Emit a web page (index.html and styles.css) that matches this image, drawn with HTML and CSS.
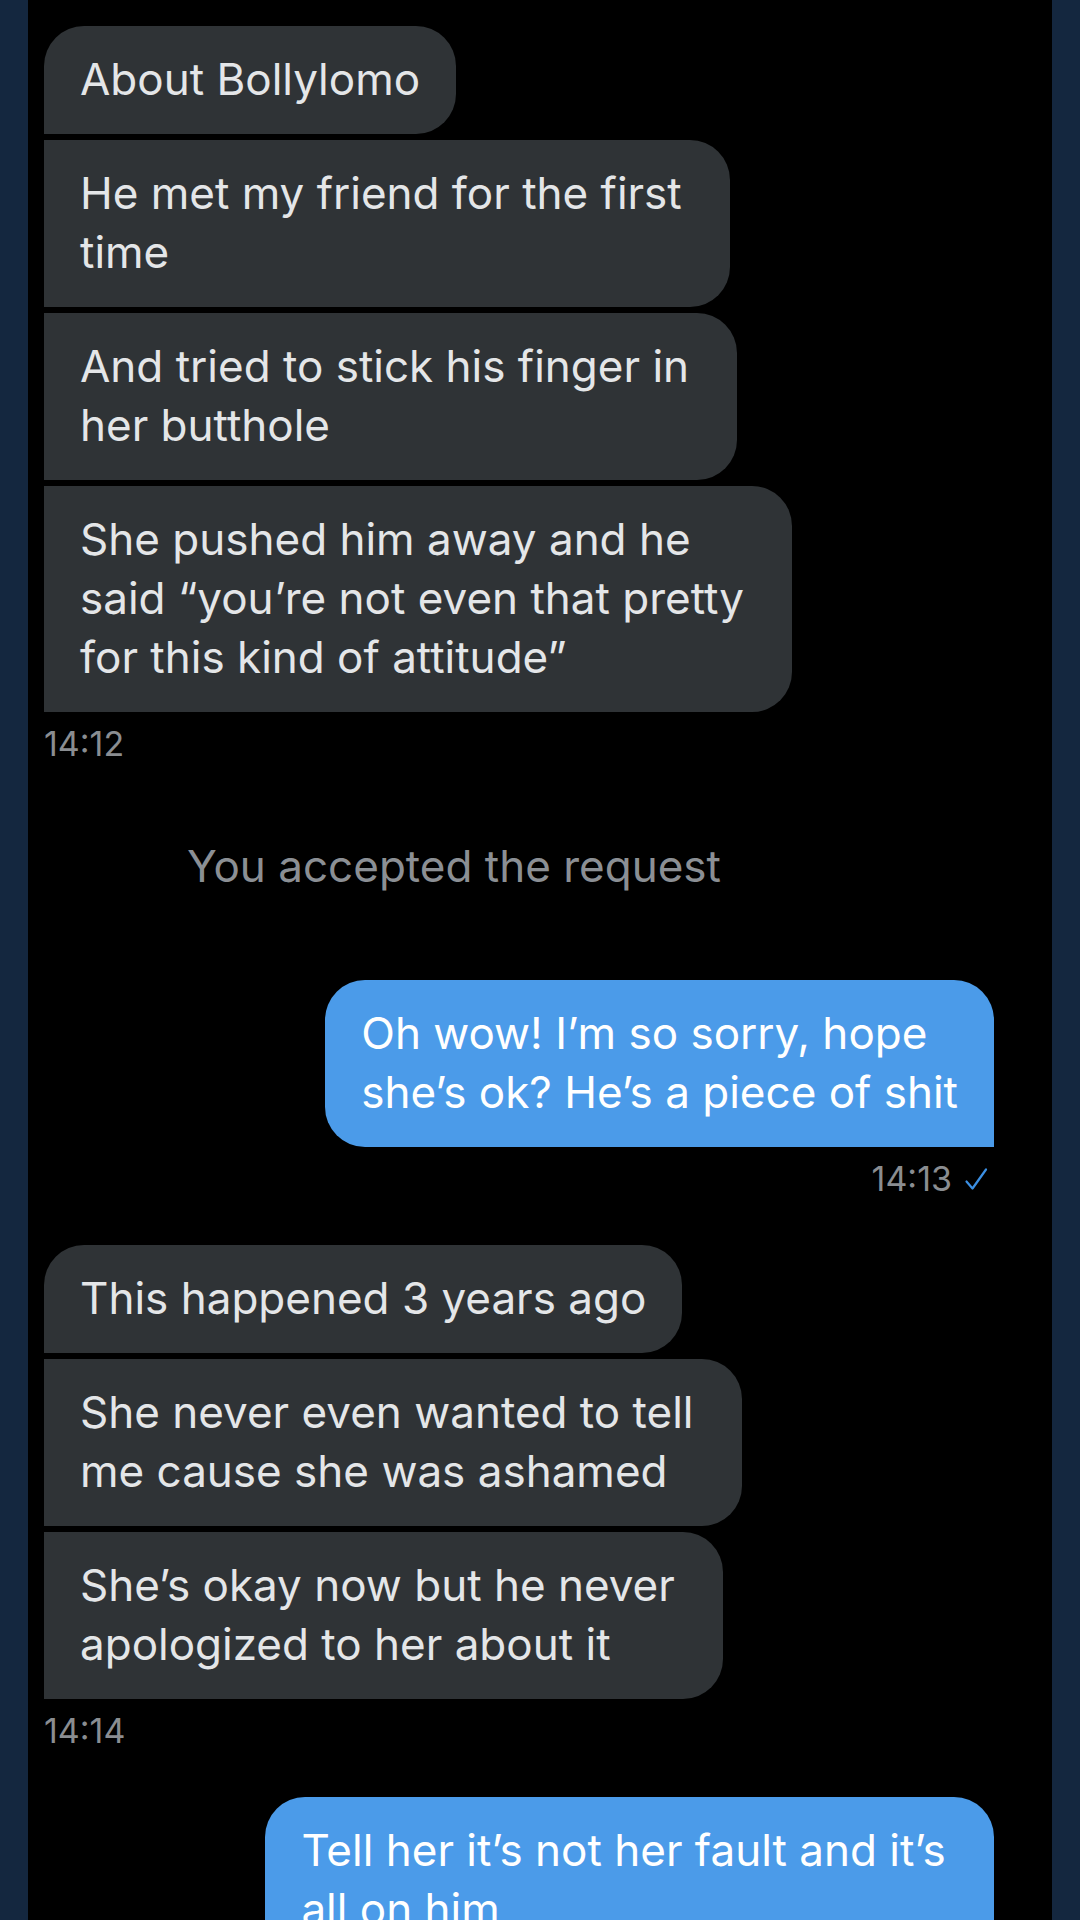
FILE: index.html
```html
<!DOCTYPE html>
<html lang="en">
  <head>
    <meta charset="UTF-8" />
    <meta name="viewport" content="width=device-width, initial-scale=1.0" />
    <title>Messages</title>
    <link rel="stylesheet" href="styles.css">
  </head>
  <body>
    <div class="chat">
      <div class="group in">
        <div class="bubble">About Bollylomo</div>
        <div class="bubble">He met my friend for the first&nbsp;<br>time</div>
        <div class="bubble">And tried to stick his finger in&nbsp;<br>her butthole</div>
        <div class="bubble">She pushed him away and he&nbsp;<br>said “you’re not even that pretty&nbsp;<br>for this kind of attitude”</div>
      </div>
      <div class="time">14:12</div>

      <div class="notice">You accepted the request</div>

      <div class="group out">
        <div class="bubble">Oh wow! I’m so sorry, hope&nbsp;<br>she’s ok? He’s a piece of shit</div>
      </div>
      <div class="time sent">
        <span>14:13</span>
        <svg class="tick" viewBox="0 0 24 24" width="24" height="24">
          <path d="M2.5 14.5 L8.5 21.5 L22 2.5" fill="none" stroke="#3b8fe3" stroke-width="2.2" stroke-linecap="round" stroke-linejoin="round" />
        </svg>
      </div>

      <div class="group in">
        <div class="bubble">This happened 3 years ago</div>
        <div class="bubble">She never even wanted to tell&nbsp;<br>me cause she was ashamed</div>
        <div class="bubble">She’s okay now but he never&nbsp;<br>apologized to her about it</div>
      </div>
      <div class="time">14:14</div>

      <div class="group out">
        <div class="bubble">Tell her it’s not her fault and it’s&nbsp;<br>all on him</div>
      </div>
    </div>
  </body>
</html>
```
FILE: styles.css
```css
body {
  margin: 0;
  background-color: #14273f;
  font-family: Inter, "Liberation Sans", sans-serif;
}
.chat {
  margin: 0 28px;
  height: 1920px;
  overflow: hidden;
  box-sizing: border-box;
  padding: 26px 58px 0 16px;
  background-color: #000;
}
.group {
  display: flex;
  flex-direction: column;
  gap: 6px;
}
.group.in {
  align-items: flex-start;
}
.group.out {
  align-items: flex-end;
}
.bubble {
  padding: 24px 36px 25px;
  font-size: 44px;
  line-height: 59px;
  white-space: nowrap;
}
.in .bubble {
  background-color: #2f3336;
  color: #e4e6e8;
  border-radius: 0 40px 40px 0;
}
.in .bubble:first-child {
  border-top-left-radius: 40px;
}
.out .bubble {
  background-color: #4b9be9;
  color: #fff;
  border-radius: 40px 40px 0 40px;
}
.time {
  margin-top: 12px;
  font-size: 34px;
  line-height: 40px;
  color: #8a8d91;
}
.time.sent {
  display: flex;
  justify-content: flex-end;
  align-items: center;
  gap: 12px;
  padding-right: 6px;
}
.tick {
  display: block;
}
.notice {
  margin-top: 73px;
  padding-left: 143px;
  font-size: 44px;
  line-height: 59px;
  color: #8b8f94;
}
.notice + .group {
  margin-top: 84px;
}
.time + .group {
  margin-top: 46px;
}
```
